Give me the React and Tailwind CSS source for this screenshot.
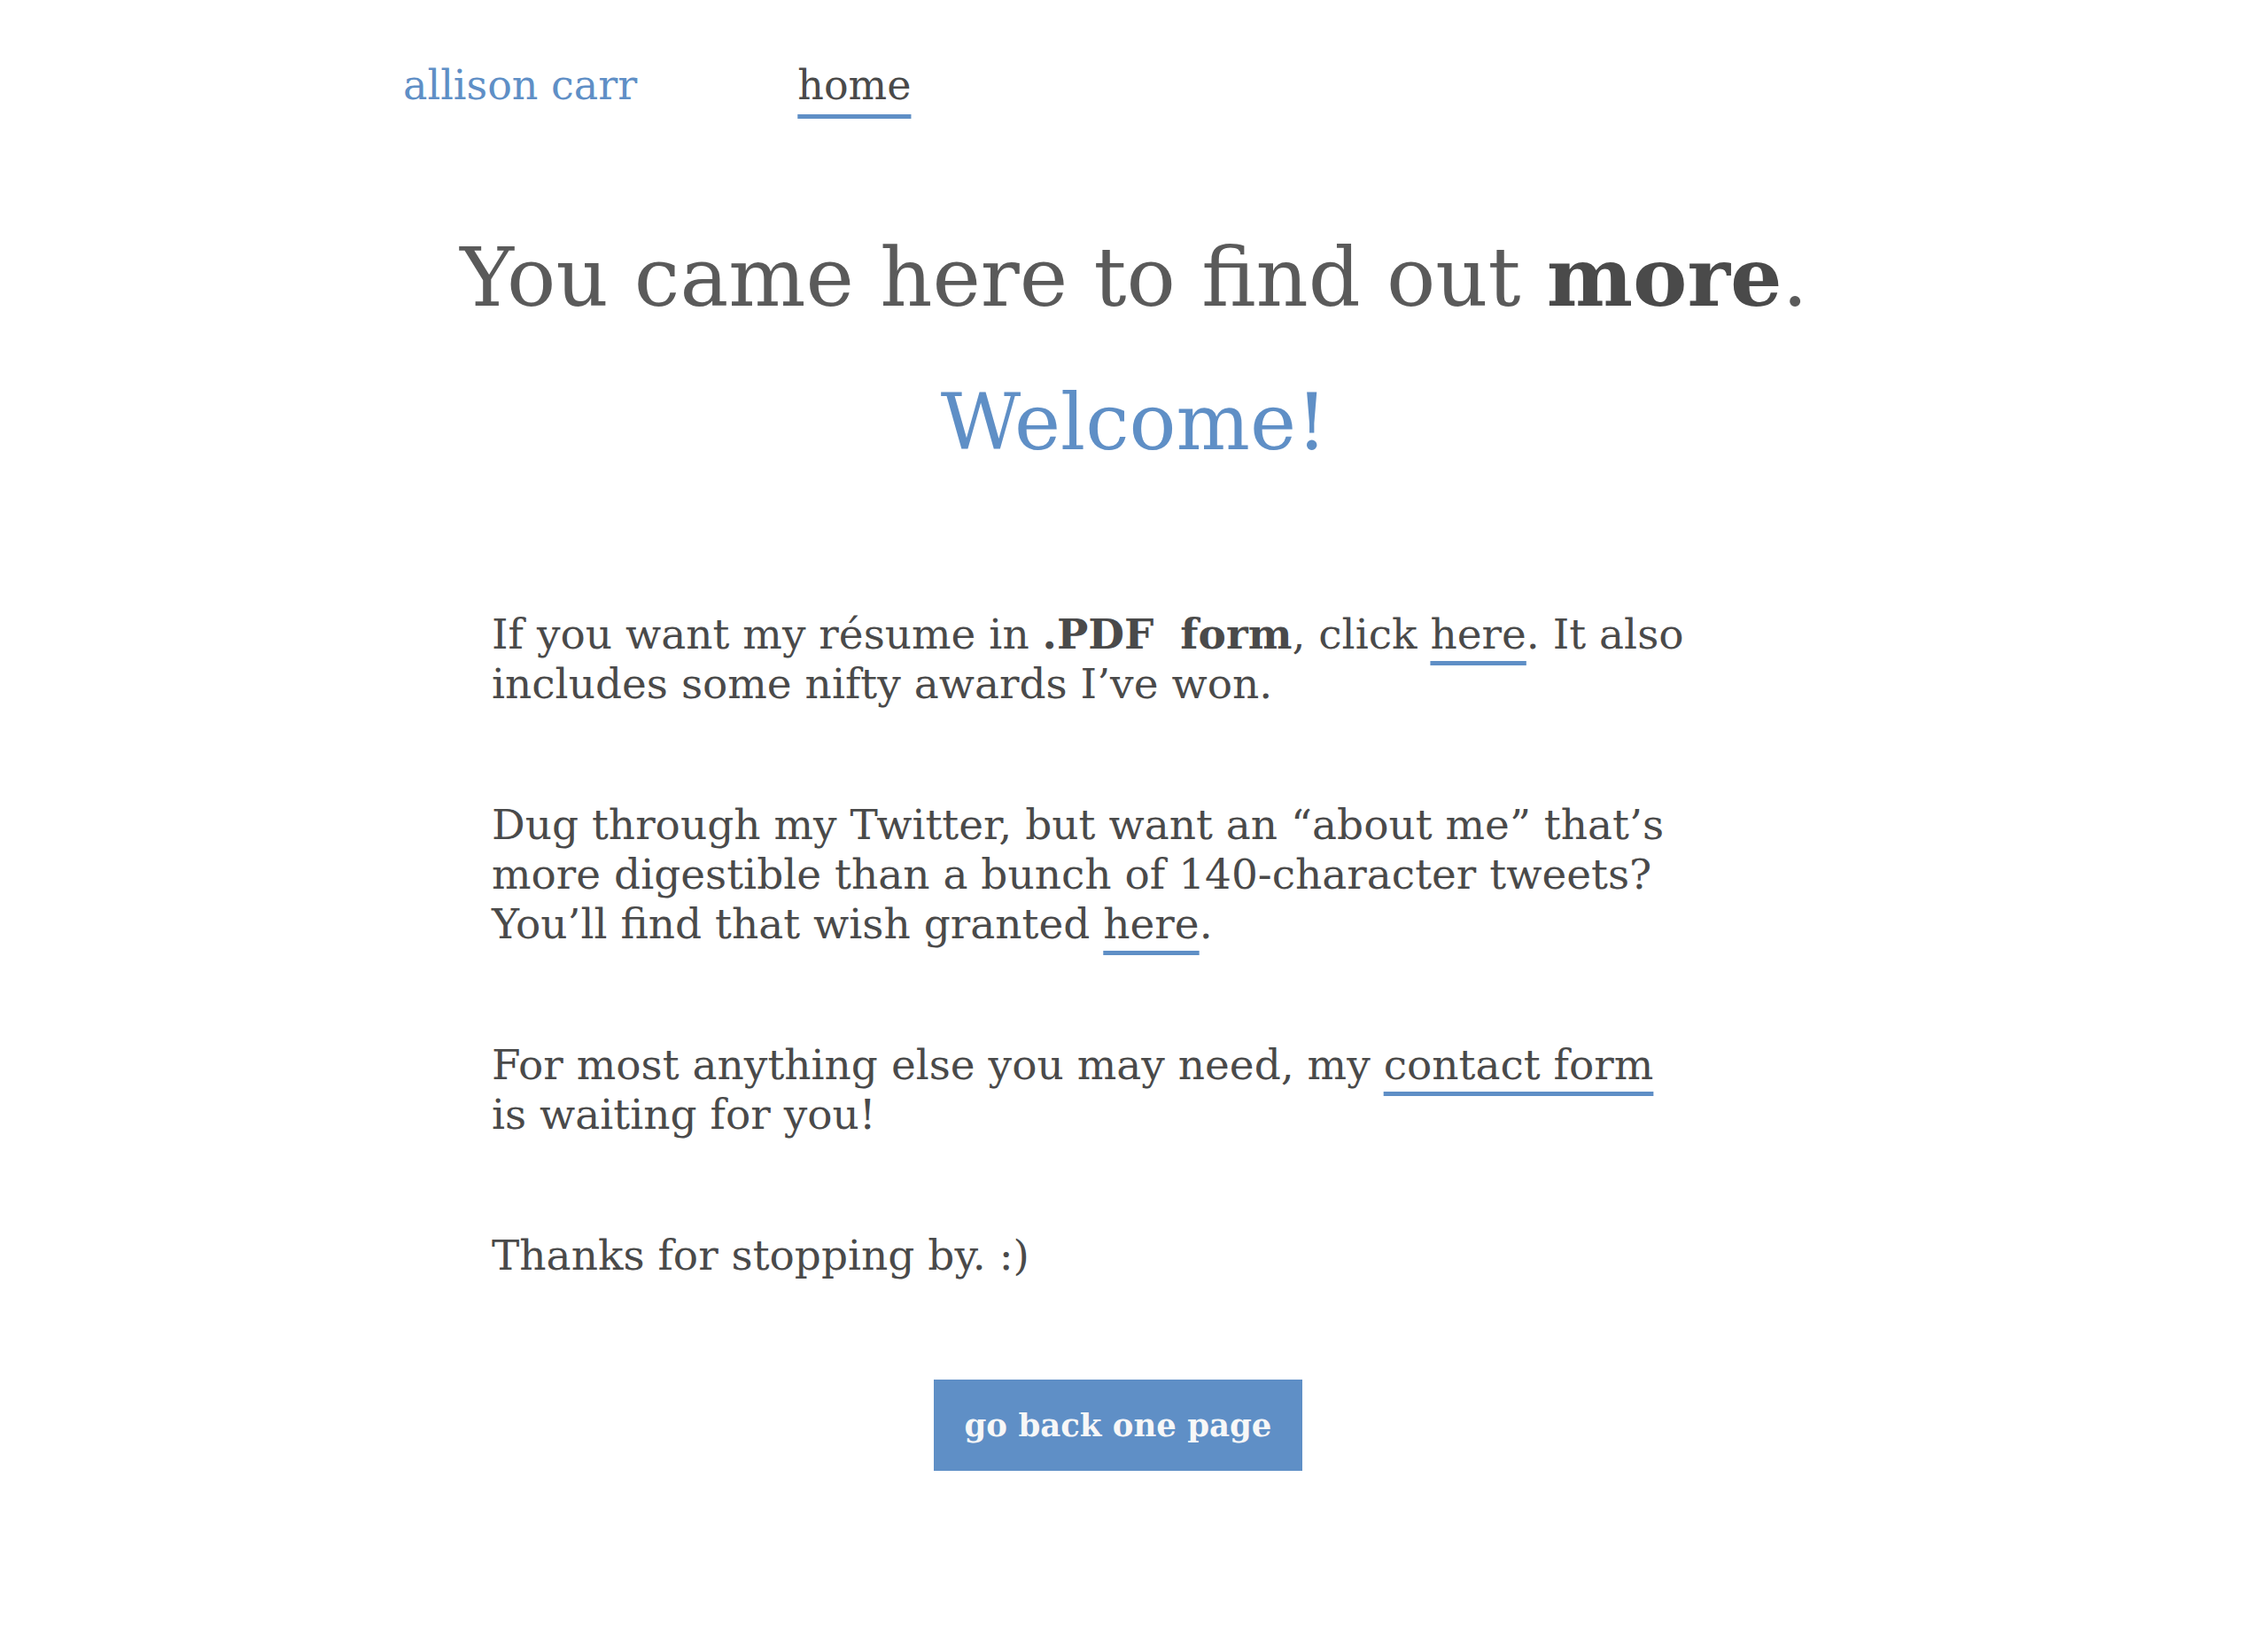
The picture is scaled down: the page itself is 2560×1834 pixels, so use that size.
import React from "react";

function Link({ children }) {
  return (
    <a
      href="#"
      className="underline decoration-[#5f8fc6] decoration-5 underline-offset-[14px]"
    >
      {children}
    </a>
  );
}

export default function App() {
  return (
    <div
      className="min-h-[1834px] bg-white text-[#4a4a4a]"
      style={{ fontFamily: '"DejaVu Serif", "Liberation Serif", serif' }}
    >
      <nav className="flex items-baseline pl-[455px] pt-[70px] text-[46px] leading-[53px]">
        <a href="#" className="text-[#5f8fc6]">
          allison carr
        </a>
        <a
          href="#"
          className="ml-[181px] underline decoration-[#5f8fc6] decoration-5 underline-offset-[17px]"
        >
          home
        </a>
      </nav>

      <h1 className="mt-[135px] text-center text-[92px] leading-[110px] font-light text-[#5a5a5a]">
        You came here to find out <b className="font-bold text-[#4a4a4a]">more</b>.
      </h1>
      <h2 className="mt-[53px] text-center text-[88px] leading-[110px] text-[#5f8fc6]">
        Welcome!
      </h2>

      <div className="ml-[555px] mt-[156px] w-[1420px] text-[47px] leading-[56px]">
        <p>
          If you want my résume in <b>.PDF</b>&nbsp; <b>form</b>, click{" "}
          <Link>here</Link>. It also
          <br />
          includes some nifty awards I’ve won.
        </p>
        <p className="mt-[103px]">
          Dug through my Twitter, but want an “about me” that’s
          <br />
          more digestible than a bunch of 140-character tweets?
          <br />
          You’ll find that wish granted <Link>here</Link>.
        </p>
        <p className="mt-[103px]">
          For most anything else you may need, my <Link>contact form</Link>
          <br />
          is waiting for you!
        </p>
        <p className="mt-[103px]">Thanks for stopping by. :)</p>
      </div>

      <div className="ml-[555px] mt-[112px] flex w-[1414px] justify-center">
        <button className="h-[103px] bg-[#5f8fc6] px-[35px] text-[35.5px] font-bold text-[#f7f7f7]">
          go back one page
        </button>
      </div>
    </div>
  );
}
